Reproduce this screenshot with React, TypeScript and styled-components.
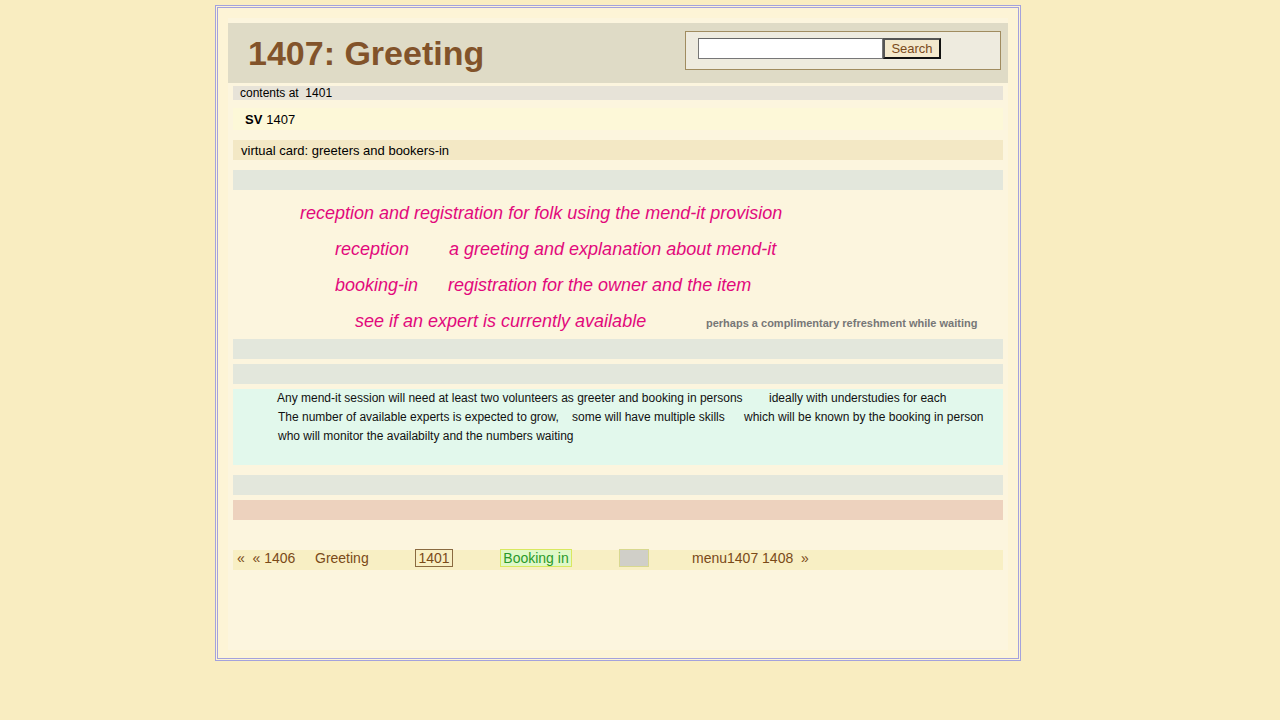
import React from "react";
import styled, { createGlobalStyle } from "styled-components";

const Global = createGlobalStyle`
	body {
		margin: 0;
		background: #f9edc1;
		font-family: "Liberation Sans", Arial, sans-serif;
	}
`;

const Page = styled.div`
	padding: 5px 0 0 215px;
`;

const Frame = styled.div`
	border: 3px double #a4a2dc;
	background: #fdf4d6;
	padding: 10px;
	box-sizing: border-box;
	width: 806px;
	height: 656px;
`;

const Panel = styled.div`
	background: #fcf5de;
	padding-top: 5px;
	height: 632px;
	box-sizing: border-box;
`;

const Header = styled.div`
	height: 60px;
	background: #dfdbc6;
	display: flex;
	align-items: center;
	justify-content: space-between;
	padding: 0 7px 0 20px;
`;

const Title = styled.h1`
	margin: 0;
	font-size: 34px;
	font-weight: bold;
	color: #82532a;
`;

const SearchBox = styled.form`
	align-self: flex-start;
	margin-top: 8px;
	width: 316px;
	height: 39px;
	box-sizing: border-box;
	background: #eeebdf;
	border: 1px solid #a08c60;
	display: flex;
	align-items: flex-start;
	padding: 6px 0 0 12px;
`;

const SearchInput = styled.input`
	width: 185px;
	height: 21px;
	box-sizing: border-box;
	border: 1px solid #777;
	border-top-color: #666;
	background: #fff;
	margin: 0;
`;

const SearchButton = styled.button`
	width: 58px;
	height: 21px;
	box-sizing: border-box;
	margin: 0;
	padding: 0;
	background: #f3e8cc;
	border: 2px solid #111;
	border-left-color: #555;
	border-top-color: #555;
	color: #7a4a20;
	font-family: "Liberation Sans", Arial, sans-serif;
	font-size: 13px;
`;

const Bar = styled.div<{ $mt: number; $h: number; $bg: string; $pl?: number; $size?: number }>`
	margin: ${(p) => p.$mt}px 5px 0 5px;
	height: ${(p) => p.$h}px;
	background: ${(p) => p.$bg};
	padding-left: ${(p) => p.$pl || 0}px;
	font-size: ${(p) => p.$size || 13}px;
	color: #000;
	display: flex;
	align-items: center;
	white-space: pre;
`;

const Strong = styled.b`
	margin-right: 4px;
`;

const Pink = styled.div`
	margin: 0 5px;
	padding-top: 5px;
`;

const PinkLine = styled.div<{ $pl: number }>`
	height: 36px;
	display: flex;
	align-items: center;
	padding-left: ${(p) => p.$pl}px;
	font-size: 18px;
	font-style: italic;
	color: #e2097c;
	white-space: pre;
`;

const Seg = styled.span<{ $w?: number }>`
	display: inline-block;
	${(p) => (p.$w ? `width: ${p.$w}px;` : "")}
`;

const Aside = styled.span`
	font-size: 11px;
	font-weight: bold;
	font-style: normal;
	color: #777;
	padding-top: 4px;
`;

const Mint = styled.div`
	margin: 5px 5px 0 5px;
	height: 76px;
	background: #e2f8ec;
	padding-left: 44px;
	font-size: 12px;
	line-height: 19px;
	color: #111;
`;

const MintLine = styled.div<{ $pl?: number }>`
	white-space: pre;
	display: flex;
	padding-left: ${(p) => p.$pl || 0}px;
`;

const Nav = styled.div`
	margin: 30px 5px 0 5px;
	height: 20px;
	background: #f8efc4;
	display: flex;
	align-items: flex-start;
	line-height: 16px;
	padding-left: 4px;
	font-size: 14px;
	color: #7a4a18;
	white-space: pre;
`;

const NavItem = styled.span<{ $w: number }>`
	display: inline-block;
	width: ${(p) => p.$w}px;
`;

const Boxed = styled.span<{ $bg: string; $border: string; $color?: string; $w: number }>`
	display: inline-flex;
	align-items: center;
	justify-content: center;
	box-sizing: border-box;
	width: ${(p) => p.$w}px;
	height: 18px;
	margin-top: -1px;
	background: ${(p) => p.$bg};
	border: 1px solid ${(p) => p.$border};
	color: ${(p) => p.$color || "#7a4a18"};
`;

export default function App() {
	return (
		<>
			<Global />
			<Page>
				<Frame>
					<Panel>
						<Header>
							<Title>1407: Greeting</Title>
							<SearchBox onSubmit={(e) => e.preventDefault()}>
								<SearchInput type="text" />
								<SearchButton type="submit">Search</SearchButton>
							</SearchBox>
						</Header>

						<Bar $mt={3} $h={14} $bg="#e7e3d8" $pl={7} $size={12}>
							contents at  1401
						</Bar>
						<Bar $mt={8} $h={22} $bg="#fdf8d8" $pl={12}>
							<Strong>SV</Strong>1407
						</Bar>
						<Bar $mt={10} $h={20} $bg="#f3e8c5" $pl={8}>
							virtual card: greeters and bookers-in
						</Bar>
						<Bar $mt={10} $h={20} $bg="#e3e7dc" />

						<Pink>
							<PinkLine $pl={67}>reception and registration for folk using the mend-it provision</PinkLine>
							<PinkLine $pl={102}>
								<Seg $w={114}>reception</Seg>
								<Seg>a greeting and explanation about mend-it</Seg>
							</PinkLine>
							<PinkLine $pl={102}>
								<Seg $w={113}>booking-in</Seg>
								<Seg>registration for the owner and the item</Seg>
							</PinkLine>
							<PinkLine $pl={122}>
								<Seg $w={351}>see if an expert is currently available</Seg>
								<Aside>perhaps a complimentary refreshment while waiting</Aside>
							</PinkLine>
						</Pink>

						<Bar $mt={0} $h={20} $bg="#e3e7dc" />
						<Bar $mt={5} $h={20} $bg="#e3e7dc" />

						<Mint>
							<MintLine>
								<Seg $w={492}>Any mend-it session will need at least two volunteers as greeter and booking in persons</Seg>
								<Seg>ideally with understudies for each</Seg>
							</MintLine>
							<MintLine $pl={1}>
								<Seg $w={294}>The number of available experts is expected to grow,</Seg>
								<Seg $w={172}>some will have multiple skills</Seg>
								<Seg>which will be known by the booking in person</Seg>
							</MintLine>
							<MintLine $pl={1}>
								<Seg>who will monitor the availabilty and the numbers waiting</Seg>
							</MintLine>
						</Mint>

						<Bar $mt={10} $h={20} $bg="#e3e7dc" />
						<Bar $mt={5} $h={20} $bg="#edd2be" />

						<Nav>
							<NavItem $w={78}>«  « 1406</NavItem>
							<NavItem $w={100}>Greeting</NavItem>
							<Boxed $w={38} $bg="transparent" $border="#8a6a40">1401</Boxed>
							<NavItem $w={47} />
							<Boxed $w={72} $bg="#e0f8c8" $border="#d8e860" $color="#2a9a2a">Booking in</Boxed>
							<NavItem $w={47} />
							<Boxed $w={30} $bg="#d0cfc8" $border="#d8d890" />
							<NavItem $w={43} />
							<span>menu1407 1408  »</span>
						</Nav>
					</Panel>
				</Frame>
			</Page>
		</>
	);
}
